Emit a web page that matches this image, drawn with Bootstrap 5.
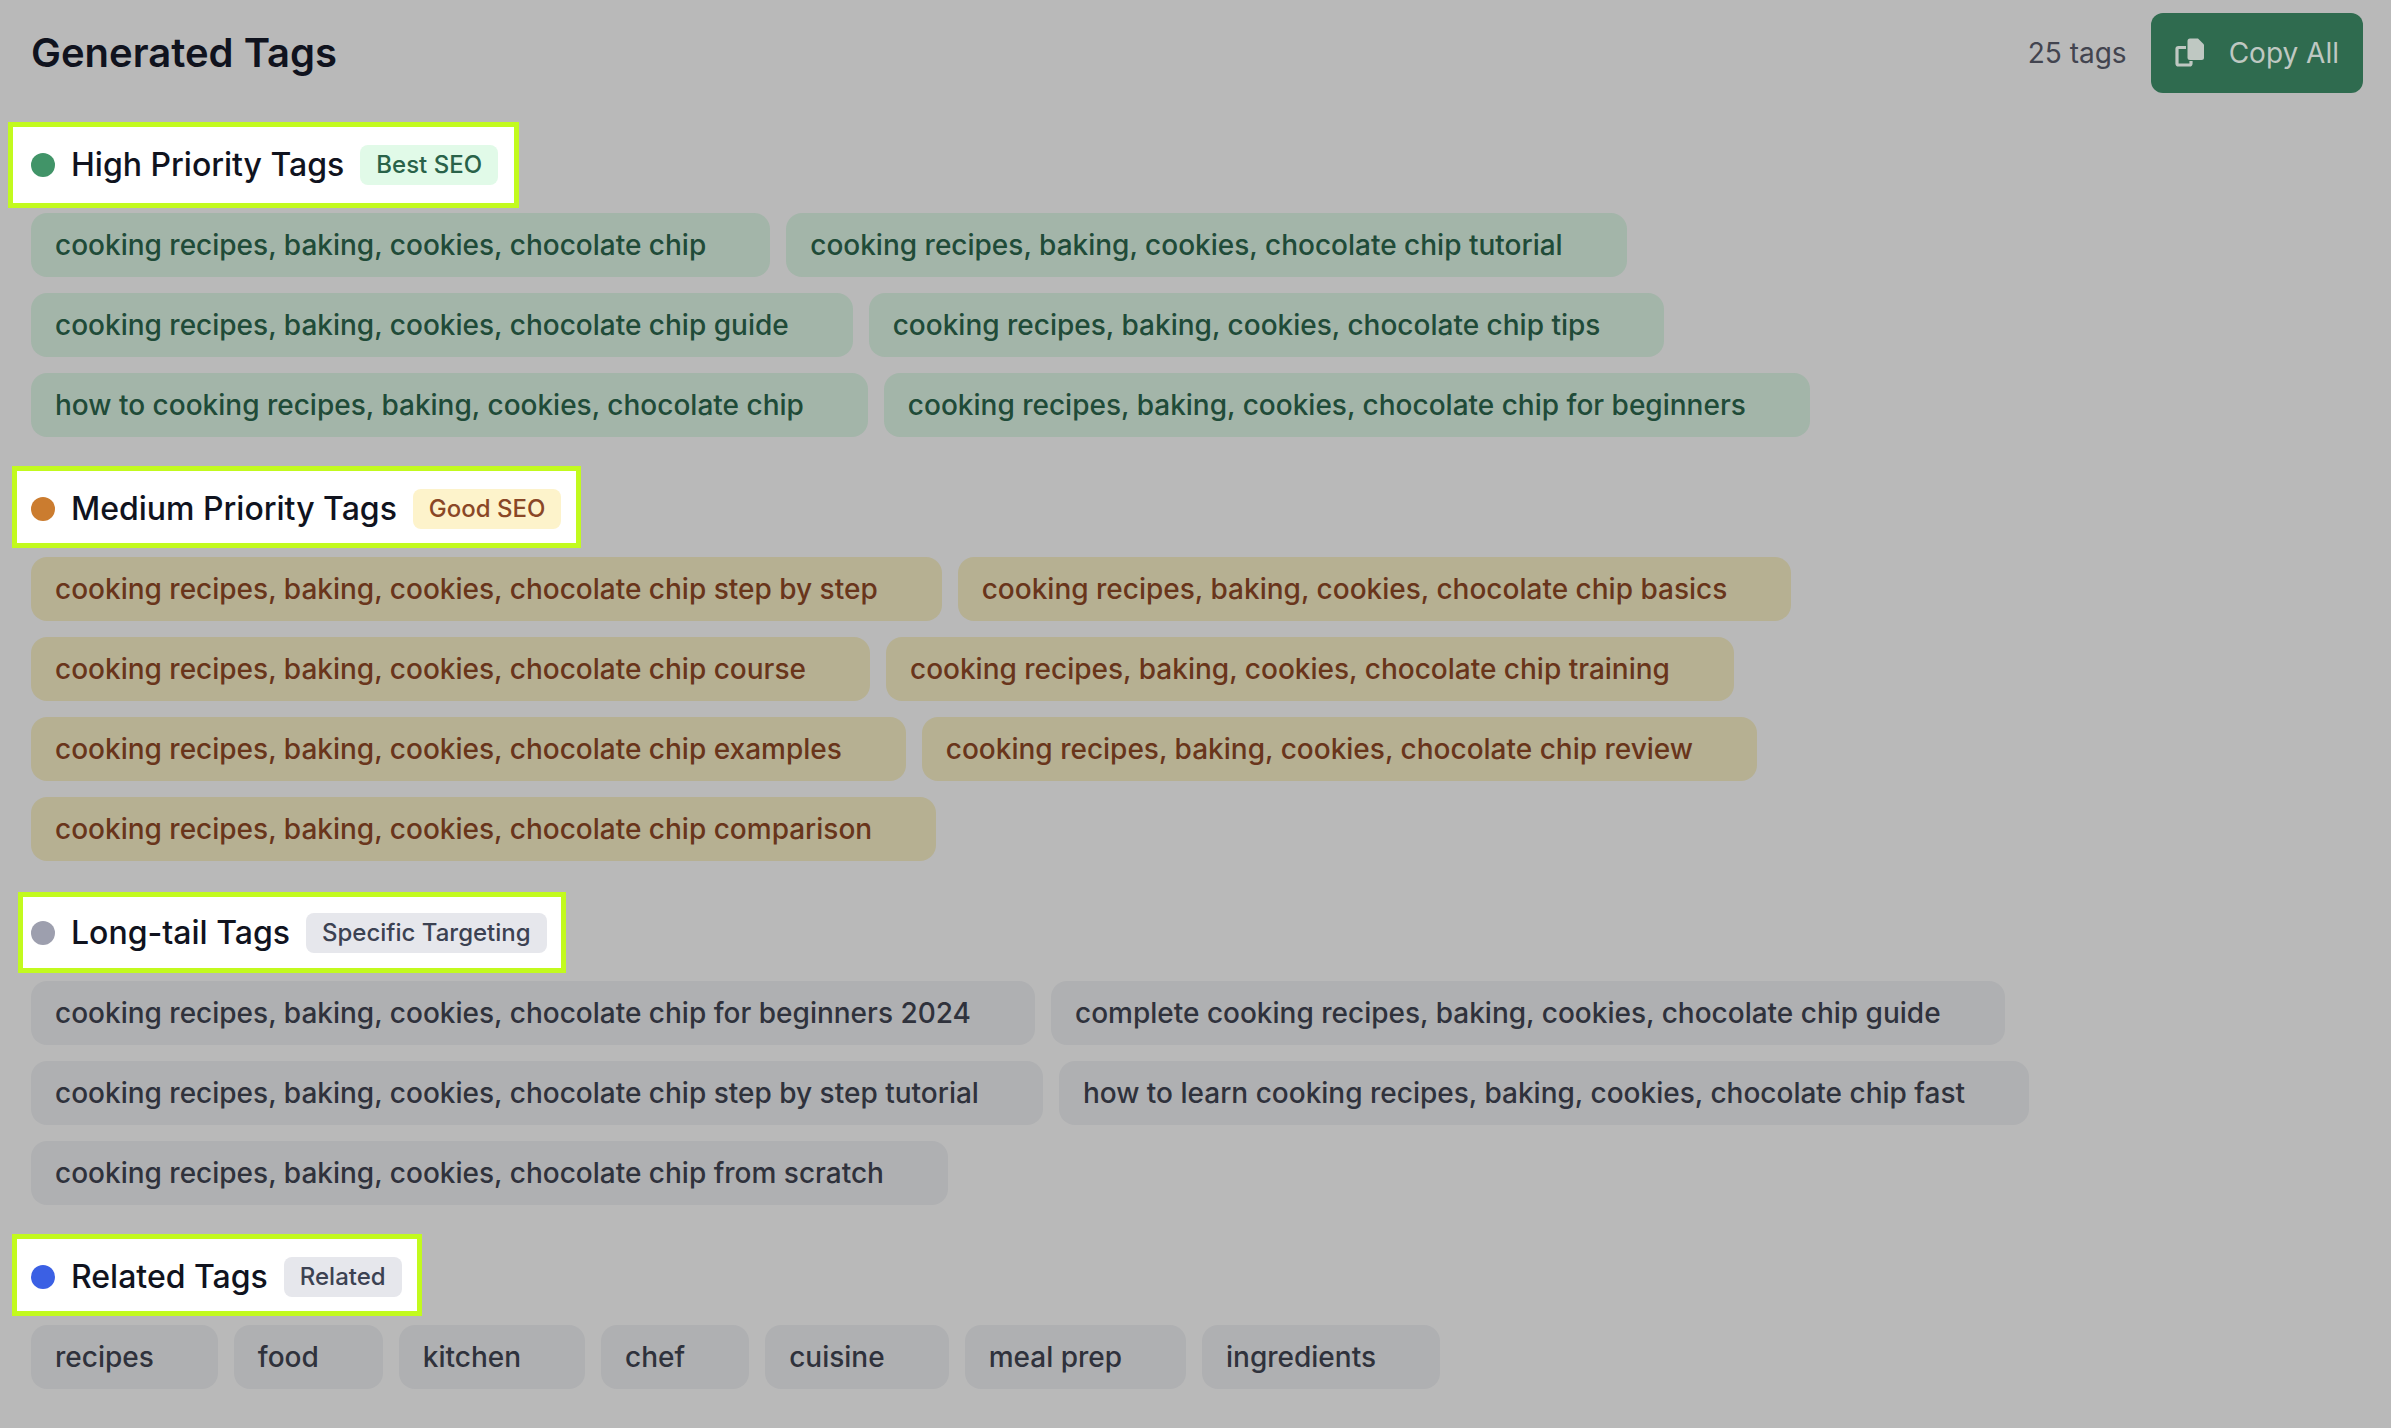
<!DOCTYPE html>
<html lang="en">
<head>
<meta charset="utf-8">
<meta name="viewport" content="width=device-width, initial-scale=1">
<title>Generated Tags</title>
<link href="https://cdn.jsdelivr.net/npm/bootstrap@5.3.0/dist/css/bootstrap.min.css" rel="stylesheet">
<style>
  body { background: #b9b9b9; color: #10131e; font-family: Inter, "Liberation Sans", sans-serif; font-size: 28px; line-height: 40px; }
  .tags-page { padding: 13px 28px 24px 31px; }
  .page-title { font-size: 40px; line-height: 56px; font-weight: 600; }
  .head-tools { gap: 24px; }
  .tag-count { color: #42444f; }
  .copy-btn { --bs-btn-color: #bfc8c2; --bs-btn-bg: #2f6b4f; --bs-btn-border-color: #2f6b4f; --bs-btn-hover-color: #d5e0d9; --bs-btn-hover-bg: #285c44; --bs-btn-padding-x: 24px; --bs-btn-padding-y: 20px; --bs-btn-border-radius: 12px; --bs-btn-font-size: 28px; --bs-btn-line-height: 40px; border: 0; gap: 24px; }
  .sections { gap: 48px; margin-top: 48px; }
  .group-head { position: relative; z-index: 0; display: inline-flex; align-items: center; gap: 16px; height: 48px; margin-bottom: 24px; }
  /* bright highlight frame behind each group heading */
  .group-head::before { content: ""; position: absolute; z-index: -1; inset: -19px -20px -15px -19px; background: #fff; border: 5px solid #c2fa1e; }
  .high .group-head::before { inset: -19px -21px -19px -23px; }
  .longtail .group-head::before { inset: -17px -19px -16px -13px; }
  .dot { width: 24px; height: 24px; background: var(--dot); }
  .group-title { font-size: 32px; line-height: 48px; font-weight: 500; }
  .pill { background: var(--pill-bg); color: var(--pill-fg); font-size: 24px; line-height: 32px; font-weight: 500; padding: 4px 16px; border-radius: 8px; }
  .tag-list { gap: 16px; }
  .tag-chip { background: var(--chip-bg); color: var(--chip-fg); font-weight: 500; line-height: 40px; padding: 12px 64px 12px 24px; border-radius: 16px; }
  .high { --dot: #419468; --pill-bg: #e1fae8; --pill-fg: #296249; --chip-bg: #a3b5a9; --chip-fg: #204b38; }
  .medium { --dot: #cb7c2f; --pill-bg: #fdf3cb; --pill-fg: #8a4726; --chip-bg: #b6b092; --chip-fg: #69351b; }
  .longtail { --dot: #9d9fae; --pill-bg: #e6e7ec; --pill-fg: #3c4252; --chip-bg: #afb0b2; --chip-fg: #2f323c; }
  .related { --dot: #3b60e4; --pill-bg: #e6e7ec; --pill-fg: #3c4252; --chip-bg: #afb0b2; --chip-fg: #2f323c; }
</style>
<script src="https://cdn.jsdelivr.net/npm/bootstrap@5.3.0/dist/js/bootstrap.bundle.min.js"></script>
</head>
<body>
<main class="tags-page container-fluid">
  <header class="d-flex justify-content-between align-items-center">
    <h1 class="page-title mb-0">Generated Tags</h1>
    <div class="head-tools d-flex align-items-center">
      <span class="tag-count">25 tags</span>
      <button type="button" class="copy-btn btn d-inline-flex align-items-center">
        <svg width="30" height="30" viewBox="0 0 30 30" fill="none" aria-hidden="true">
          <path d="M11 9.500H3.500Q2 9.500 2 11V25.500Q2 27 3.500 27H14.500Q16 27 16 25.500V23" stroke="currentColor" stroke-width="3.200"/>
          <path d="M15 .5H23L29 6.500V19.500Q29 22 26.500 22H15Q12.500 22 12.500 19.500V3Q12.500 .5 15 .5Z" fill="currentColor"/>
        </svg>
        <span>Copy All</span>
      </button>
    </div>
  </header>

  <div class="sections d-flex flex-column">
    <section class="high">
      <div class="group-head"><span class="dot rounded-circle"></span><h2 class="group-title mb-0">High Priority Tags</h2><span class="pill">Best SEO</span></div>
      <ul class="tag-list list-unstyled d-flex flex-wrap mb-0">
        <li class="tag-chip">cooking recipes, baking, cookies, chocolate chip</li>
        <li class="tag-chip">cooking recipes, baking, cookies, chocolate chip tutorial</li>
        <li class="tag-chip">cooking recipes, baking, cookies, chocolate chip guide</li>
        <li class="tag-chip">cooking recipes, baking, cookies, chocolate chip tips</li>
        <li class="tag-chip">how to cooking recipes, baking, cookies, chocolate chip</li>
        <li class="tag-chip">cooking recipes, baking, cookies, chocolate chip for beginners</li>
      </ul>
    </section>
    <section class="medium">
      <div class="group-head"><span class="dot rounded-circle"></span><h2 class="group-title mb-0">Medium Priority Tags</h2><span class="pill">Good SEO</span></div>
      <ul class="tag-list list-unstyled d-flex flex-wrap mb-0">
        <li class="tag-chip">cooking recipes, baking, cookies, chocolate chip step by step</li>
        <li class="tag-chip">cooking recipes, baking, cookies, chocolate chip basics</li>
        <li class="tag-chip">cooking recipes, baking, cookies, chocolate chip course</li>
        <li class="tag-chip">cooking recipes, baking, cookies, chocolate chip training</li>
        <li class="tag-chip">cooking recipes, baking, cookies, chocolate chip examples</li>
        <li class="tag-chip">cooking recipes, baking, cookies, chocolate chip review</li>
        <li class="tag-chip">cooking recipes, baking, cookies, chocolate chip comparison</li>
      </ul>
    </section>
    <section class="longtail">
      <div class="group-head"><span class="dot rounded-circle"></span><h2 class="group-title mb-0">Long-tail Tags</h2><span class="pill">Specific Targeting</span></div>
      <ul class="tag-list list-unstyled d-flex flex-wrap mb-0">
        <li class="tag-chip">cooking recipes, baking, cookies, chocolate chip for beginners 2024</li>
        <li class="tag-chip">complete cooking recipes, baking, cookies, chocolate chip guide</li>
        <li class="tag-chip">cooking recipes, baking, cookies, chocolate chip step by step tutorial</li>
        <li class="tag-chip">how to learn cooking recipes, baking, cookies, chocolate chip fast</li>
        <li class="tag-chip">cooking recipes, baking, cookies, chocolate chip from scratch</li>
      </ul>
    </section>
    <section class="related">
      <div class="group-head"><span class="dot rounded-circle"></span><h2 class="group-title mb-0">Related Tags</h2><span class="pill">Related</span></div>
      <ul class="tag-list list-unstyled d-flex flex-wrap mb-0">
        <li class="tag-chip">recipes</li>
        <li class="tag-chip">food</li>
        <li class="tag-chip">kitchen</li>
        <li class="tag-chip">chef</li>
        <li class="tag-chip">cuisine</li>
        <li class="tag-chip">meal prep</li>
        <li class="tag-chip">ingredients</li>
      </ul>
    </section>
  </div>
</main>
</body>
</html>
